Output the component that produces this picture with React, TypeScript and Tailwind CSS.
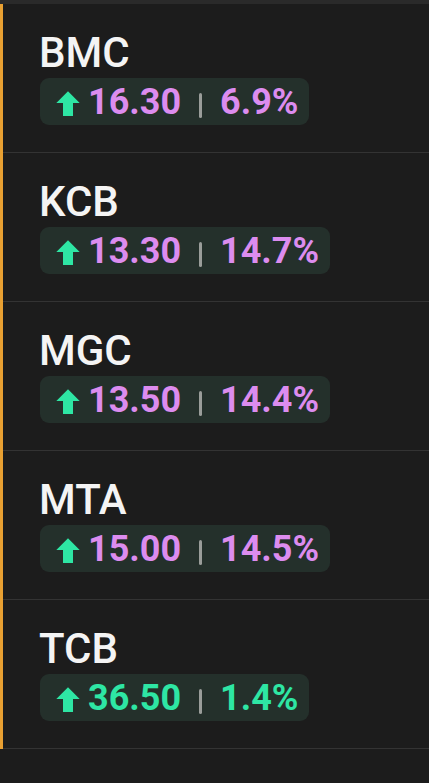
import React from 'react';

interface Quote {
  symbol: string;
  price: string;
  change: string;
  tone: 'purple' | 'green';
}

const quotes: Quote[] = [
  { symbol: 'BMC', price: '16.30', change: '6.9%', tone: 'purple' },
  { symbol: 'KCB', price: '13.30', change: '14.7%', tone: 'purple' },
  { symbol: 'MGC', price: '13.50', change: '14.4%', tone: 'purple' },
  { symbol: 'MTA', price: '15.00', change: '14.5%', tone: 'purple' },
  { symbol: 'TCB', price: '36.50', change: '1.4%', tone: 'green' },
];

function UpArrow() {
  return (
    <svg width="24" height="25" viewBox="0 0 24 25" className="shrink-0 text-[#2ee6a4] mt-[3px]">
      <path d="M12 0.3 L23.7 12 L17 12 L17 25 L7 25 L7 12 L0.3 12 Z" fill="currentColor" />
    </svg>
  );
}

function QuoteRow({ q }: { q: Quote }) {
  const color = q.tone === 'purple' ? 'text-[#dc8cef]' : 'text-[#2ee6a4]';
  return (
    <div className="h-[149px] border-b border-[#333333] pl-[36px] pt-[28px]">
      <div className="text-[42px] leading-none font-medium text-[#f4f4f4]">{q.symbol}</div>
      <div className="mt-[4px] ml-[1px] inline-flex h-[47px] items-center rounded-[9px] bg-[#24302b] pl-[16px] pr-[11px]">
        <UpArrow />
        <span className={`ml-[8px] text-[36px] leading-none font-bold ${color}`}>{q.price}</span>
        <div className="mx-[18px] mt-[8px] h-[25px] w-[3px] shrink-0 rounded-full bg-[#9a9d9a]" />
        <span className={`text-[36px] leading-none font-bold ${color}`}>{q.change}</span>
      </div>
    </div>
  );
}

export default function App() {
  return (
    <div className="h-[783px] w-[429px] overflow-hidden bg-[#1c1c1c]" style={{ fontFamily: 'Roboto, "Noto Sans", sans-serif' }}>
      {/* top strip */}
      <div className="h-[4px] bg-[#2a2a2a]" />
      <div className="border-l-[3px] border-[#e8a032]">
        {quotes.map((q) => (
          <QuoteRow key={q.symbol} q={q} />
        ))}
      </div>
    </div>
  );
}
